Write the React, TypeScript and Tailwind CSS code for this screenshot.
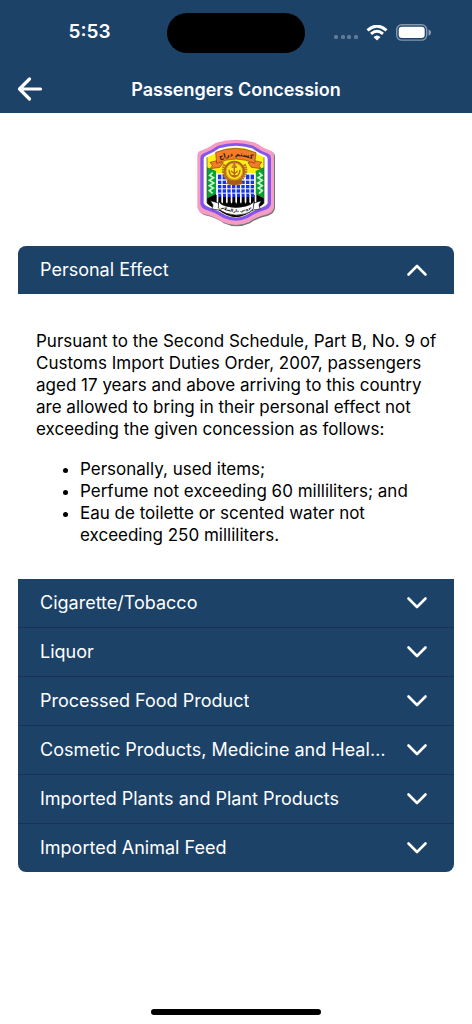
import { useState } from "react";

const lattice = [84, 98, 112, 126, 140, 154, 168, 182];
const bars = [140, 153, 166, 179];

function Crest() {
  return (
    <svg viewBox="0 0 276 294" className="h-[98px] w-[92px]" role="img" aria-label="Royal Customs crest">
      <defs>
        <clipPath id="shield">
          <path d="M51 70Q70 62 88 50Q138 30 186 50Q204 62 222 70V208Q213 219 190 228Q160 250 138 250Q115 250 85 228Q60 219 51 208Z" />
        </clipPath>
        <path id="top-arc" d="M80 80Q138 53 196 80" />
        <path id="bottom-arc" d="M76 212Q138 257 202 212" />
      </defs>
      <path d="M33 54Q58 46 82 29Q140 12 198 29Q222 46 246 54Q255 58 255 69V222Q254 238 234 245Q204 250 180 268Q140 286 101 268Q77 250 45 244Q26 238 25 220V66Q25 57 33 54Z" fill="#777" />
      <path d="M30 51Q54 43 78 26Q138 8 196 26Q220 43 244 51Q252 55 252 66V219Q251 235 232 241Q201 247 178 264Q138 282 97 264Q73 247 43 241Q24 235 22 218V66Q22 55 30 51Z" fill="#f59bc4" />
      <path d="M39 59Q62 51 84 35Q138 19 190 35Q212 51 235 59Q243 63 243 72V210Q240 224 222 229Q197 236 173 252Q138 268 101 252Q78 236 52 229Q34 224 31 210V72Q31 63 39 59Z" fill="#8456e8" />
      <path d="M47 65Q68 57 88 43Q138 28 186 43Q206 57 227 65Q233 68 233 75V207Q229 217 213 221Q190 229 168 244Q138 257 107 244Q84 229 61 221Q45 217 41 207V75Q41 68 47 65Z" fill="#fff" />
      <g clipPath="url(#shield)">
        <rect x="50" y="30" width="174" height="225" fill="#ffee14" />
        <path d="M50 99L78 111V181L50 193ZM223 99L197 111V181L223 193Z" fill="#08a334" />
        <path d="M50 193L78 180H197L223 193V255H50Z" fill="#050505" />
        <rect x="78" y="117" width="119" height="66" fill="#eef3ff" />
        {bars.map((y) =>
          lattice.map((x) => <rect key={`${x}-${y}`} x={x} y={y} width="10" height="10" fill="#1635df" />),
        )}
        {[84, 98, 168, 182].map((x) => (
          <rect key={x} x={x} y="122" width="10" height="14" fill="#1635df" />
        ))}
        {lattice.map((x) => (
          <path key={x} d={`M${x - 4} 181h5v23l-2 5l-3-5Z`} fill="#fff" />
        ))}
        <path d="M194 181h5v23l-2 5l-3-5Z" fill="#fff" />
        <path d="M68 116l-9 8 12 7-13 8 13 8-13 8 12 7-12 8 10 8M207 116l9 8-12 7 13 8-13 8 13 8-12 7 12 8-10 8" fill="none" stroke="#c9f5cf" strokeWidth="5" />
      </g>
      <path d="M51 70V208M222 70V208" stroke="#48412c" strokeWidth="2" />
      <g fill="#f47b27" stroke="#79431a" strokeWidth="2">
        <path d="M80 80L60 85L67 95L60 104L90 100L100 86ZM194 80L215 85L207 95L214 104L184 100L174 86Z" />
        <path d="M77 55Q137 31 198 56L194 88Q137 62 80 88Z" />
      </g>
      <text fontSize="19" fontWeight="700" textAnchor="middle" className="fill-[#24170d] font-['DejaVu_Sans',sans-serif]">
        <textPath href="#top-arc" startOffset="50%">كستم دراج</textPath>
      </text>
      <circle cx="133" cy="113" r="29" fill="#ffdf15" stroke="#a9661b" strokeWidth="7" />
      <circle cx="133" cy="112" r="25" fill="#ffe51b" stroke="#e09420" strokeWidth="3" />
      <path d="M104 91Q91 121 119 142M163 91Q177 121 147 142" fill="none" stroke="#bb7422" strokeWidth="9" strokeDasharray="5 2" />
      <path d="M115 138Q133 146 153 138L160 149Q133 157 108 149Z" fill="#a85a18" />
      <path d="M133 87V128M125 99H141M117 107Q118 126 133 129Q149 126 150 107M123 111L133 119L143 111M121 125H145" fill="none" stroke="#b96818" strokeWidth="4" />
      <circle cx="133" cy="94" r="5" fill="#c97a1c" />
      <g fill="#fff" stroke="#111" strokeWidth="2">
        <path d="M85 207L61 200L69 213L66 225L92 229ZM192 207L214 200L207 213L210 225L184 229Z" />
        <path d="M86 202Q92 213 107 216Q138 225 169 216Q184 213 192 202L190 224Q179 237 164 240Q138 248 109 238Q94 233 85 222Z" />
      </g>
      <text fontSize="12" fontWeight="700" textAnchor="middle" className="fill-black font-['DejaVu_Sans',sans-serif]">
        <textPath href="#bottom-arc" startOffset="50%">بروني دارالسلام</textPath>
      </text>
    </svg>
  );
}

function StatusBar() {
  return (
    <div className="grid h-[65px] grid-cols-[1fr_138px_1fr] items-center">
      <span className="justify-self-center pl-3 text-[19px] font-semibold">5:53</span>
      <div className="h-10 rounded-full bg-black" />
      <div className="flex items-center justify-end gap-2 pr-[41px]">
        <svg viewBox="0 0 24 6" className="mt-2 h-[6px] w-6 fill-white/30" aria-hidden="true">
          <rect x="0" y="1" width="4" height="4" rx="1.5" />
          <rect x="7" y="1" width="4" height="4" rx="1.5" />
          <rect x="13" y="1" width="4" height="4" rx="1.5" />
          <rect x="20" y="1" width="4" height="4" rx="1.5" />
        </svg>
        <svg viewBox="0 0 22 16" className="h-4 w-[22px]" aria-hidden="true">
          <path d="M1.5 5.3Q11-3 20.5 5.3M5 8.8Q11 3.8 17 8.8" fill="none" stroke="white" strokeWidth="3" />
          <path d="M7.5 12Q11 8.8 14.5 12L11 15.5Z" fill="white" />
        </svg>
        <svg viewBox="0 0 35 17" className="h-[17px] w-[35px]" aria-hidden="true">
          <rect x="0.7" y="0.7" width="30" height="15.4" rx="5" fill="none" stroke="white" strokeOpacity=".45" strokeWidth="1.4" />
          <rect x="2.7" y="2.7" width="26" height="11.4" rx="3.3" fill="white" />
          <path d="M32.5 5.5Q35 6 35 8.5T32.5 11.5Z" fill="white" fillOpacity=".5" />
        </svg>
      </div>
    </div>
  );
}

function Chevron({ open }: { open: boolean }) {
  return (
    <svg viewBox="0 0 22 14" className="h-[14px] w-[22px] shrink-0" fill="none" stroke="white" strokeWidth="2.6" strokeLinecap="round" strokeLinejoin="round" aria-hidden="true">
      <path d={open ? "M2.5 11.5L11 3L19.5 11.5" : "M2.5 2.5L11 11L19.5 2.5"} />
    </svg>
  );
}

const sections = [
  "Personal Effect",
  "Cigarette/Tobacco",
  "Liquor",
  "Processed Food Product",
  "Cosmetic Products, Medicine and Health Products",
  "Imported Plants and Plant Products",
  "Imported Animal Feed",
];

export default function App() {
  const [openIndex, setOpenIndex] = useState(0);
  return (
    <div className="flex min-h-screen flex-col bg-white font-['Inter',sans-serif] text-black">
      <header className="bg-[#1d4268] text-white">
        <StatusBar />
        <div className="grid h-12 grid-cols-[48px_1fr_48px] items-center">
          <button type="button" aria-label="Back" className="flex h-12 items-center pl-4">
            <svg viewBox="0 0 28 26" className="h-[26px] w-7" fill="none" stroke="white" strokeWidth="3.2" strokeLinecap="round" strokeLinejoin="round" aria-hidden="true">
              <path d="M13.5 3L3.5 13L13.5 23M4 13H24.5" />
            </svg>
          </button>
          <h1 className="pt-px text-center text-lg font-semibold">Passengers Concession</h1>
        </div>
      </header>
      <main className="flex flex-1 flex-col px-[18px] pt-[21px]">
        <div className="flex justify-center">
          <Crest />
        </div>
        <div className="mt-[14px] overflow-hidden rounded-lg">
          {sections.map((title, i) => {
            const open = openIndex === i;
            return (
              <section key={title}>
                <h2>
                  <button
                    type="button"
                    aria-expanded={open}
                    onClick={() => setOpenIndex(open ? -1 : i)}
                    className={`flex w-full items-center justify-between gap-4 bg-[#1d4268] pr-[26px] pl-[22px] text-left text-lg text-white ${
                      open || i === sections.length - 1 ? "h-12" : "h-[49px] border-b border-[#173458]"
                    }`}
                  >
                    <span className="min-w-0 truncate">{title}</span>
                    <Chevron open={open} />
                  </button>
                </h2>
                {open && i === 0 && (
                  <div className="pt-9 pr-2 pb-[33px] pl-[18px] text-[17px] leading-[22px]">
                    <p>
                      Pursuant to the Second Schedule, Part B, No. 9 of Customs Import Duties Order, 2007, passengers
                      aged 17 years and above arriving to this country are allowed to bring in their personal effect not
                      exceeding the given concession as follows:
                    </p>
                    <ul className="mt-[18px] list-disc pl-11">
                      <li>Personally, used items;</li>
                      <li>Perfume not exceeding 60 milliliters; and</li>
                      <li>Eau de toilette or scented water not exceeding 250 milliliters.</li>
                    </ul>
                  </div>
                )}
              </section>
            );
          })}
        </div>
      </main>
      <footer className="flex justify-center pb-[9px]">
        <div className="h-[6px] w-[170px] rounded-full bg-black" />
      </footer>
    </div>
  );
}
